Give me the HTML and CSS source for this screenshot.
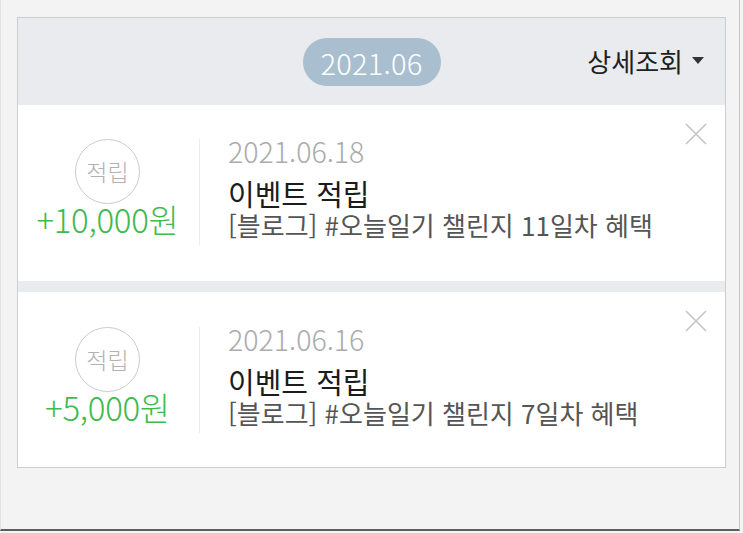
FILE: index.html
```html
<!DOCTYPE html>
<html lang="ko">
<head>
<meta charset="utf-8">
<title>적립 내역</title>
<link rel="stylesheet" href="styles.css">
</head>
<body>
<div class="frame">
  <div class="card">
    <div class="header">
      <div class="spacer"></div>
      <div class="pill">2021.06</div>
      <div class="detail">상세조회 <span class="caret"></span></div>
    </div>

    <div class="row">
      <div class="left">
        <div class="badge">적립</div>
        <div class="amount">+10,000원</div>
      </div>
      <div class="divider"></div>
      <div class="info">
        <div class="date">2021.06.18</div>
        <div class="title">이벤트 적립</div>
        <div class="desc">[블로그] #오늘일기 챌린지 11일차 혜택</div>
      </div>
      <svg class="close" viewBox="0 0 22 22" width="22" height="22"><path d="M1 1L21 21M21 1L1 21" stroke="#c4c4c4" stroke-width="1.6" fill="none"/></svg>
    </div>

    <div class="sep"></div>

    <div class="row row2">
      <div class="left">
        <div class="badge">적립</div>
        <div class="amount">+5,000원</div>
      </div>
      <div class="divider"></div>
      <div class="info">
        <div class="date">2021.06.16</div>
        <div class="title">이벤트 적립</div>
        <div class="desc">[블로그] #오늘일기 챌린지 7일차 혜택</div>
      </div>
      <svg class="close" viewBox="0 0 22 22" width="22" height="22"><path d="M1 1L21 21M21 1L1 21" stroke="#c4c4c4" stroke-width="1.6" fill="none"/></svg>
    </div>
  </div>
</div>
</body>
</html>
```

FILE: styles.css
```css
html, body {
  margin: 0;
  padding: 0;
  background: #f4f4f4;
}
body {
  font-family: "Noto Sans CJK KR", "Noto Sans", sans-serif;
  font-weight: 300;
  width: 743px;
  height: 533px;
  overflow: hidden;
}
.frame {
  box-sizing: border-box;
  width: 740px;
  height: 531px;
  padding: 17px 0 0 16px;
  background: #f3f3f3;
  border-left: 1px solid #e2e2e2;
  border-right: 1px solid #c6c6c6;
  border-bottom: 2px solid #5c5c5c;
}
.card {
  box-sizing: border-box;
  width: 709px;
  border: 1px solid #cdcdcd;
  background: #ffffff;
}
.header {
  height: 87px;
  background: #e9ebee;
  display: grid;
  grid-template-columns: 1fr auto 1fr;
  align-items: center;
  padding-right: 21px;
  padding-left: 21px;
}
.pill {
  width: 138px;
  height: 48px;
  border-radius: 24px;
  background: #a9bfd0;
  color: #ffffff;
  font-size: 29px;
  line-height: 48px;
  text-align: center;
  letter-spacing: 0.2px;
}
.detail {
  justify-self: end;
  display: flex;
  align-items: center;
  gap: 9px;
  font-size: 26px;
  font-weight: 400;
  color: #1f1f1f;
  line-height: 30px;
  margin-top: -2px;
}
.caret {
  width: 0;
  height: 0;
  border-left: 6.5px solid transparent;
  border-right: 6.5px solid transparent;
  border-top: 7px solid #333;
}
.row {
  position: relative;
  display: flex;
  align-items: flex-start;
  padding: 34px 0 36px;
  background: #fff;
}
.row2 {
  padding-top: 35px;
  padding-bottom: 34px;
}
.left {
  width: 179px;
  display: flex;
  flex-direction: column;
  align-items: center;
}
.badge {
  box-sizing: border-box;
  width: 65px;
  height: 65px;
  border-radius: 50%;
  border: 1.6px solid #cbcbcb;
  color: #b2b2b2;
  font-size: 23px;
  display: flex;
  align-items: center;
  justify-content: center;
  line-height: 1;
}
.amount {
  font-size: 33px;
  line-height: 30px;
  color: #3fba4f;
  letter-spacing: -0.3px;
}
.divider {
  width: 1px;
  height: 106px;
  background: #ececec;
  margin-left: 2px;
}
.info {
  padding-left: 28px;
  display: flex;
  flex-direction: column;
}
.date {
  font-size: 28.5px;
  line-height: 24px;
  color: #ababab;
}
.title {
  font-size: 29px;
  line-height: 34px;
  margin-top: 13px;
  font-weight: 400;
  color: #1c1c1c;
}
.desc {
  font-size: 26px;
  line-height: 24px;
  margin-top: 3px;
  font-weight: 400;
  color: #555555;
}
.close {
  position: absolute;
  right: 18px;
  top: 18px;
}
.sep {
  height: 11px;
  background: #e9ebee;
}
```
